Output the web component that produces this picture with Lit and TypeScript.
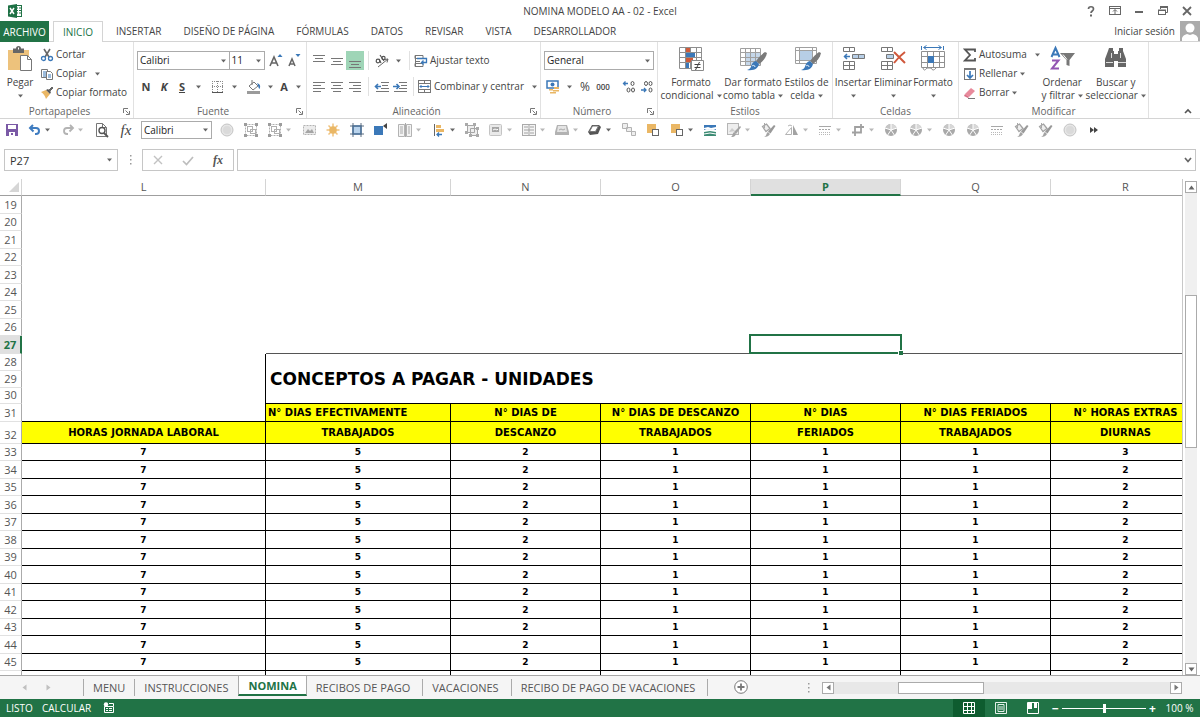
import { LitElement, html, svg, css, nothing, TemplateResult, SVGTemplateResult } from "lit";
import { customElement, property, state } from "lit/decorators.js";
import { classMap } from "lit/directives/class-map.js";

type Glyph = [number, number, SVGTemplateResult];

const SOFT = "#b3b3b3";
const BLUE = "#3b78b8";
const SAND = "#eab765";

const disc = svg`<circle cx="8" cy="8" r="6" fill="#e6e6e6" stroke="#c4c4c4"/><circle cx="8" cy="8" r="4" fill="#dadada"/>`;
const grouped = svg`<g fill="none" stroke="#b0b0b0"><rect x="2.500" y="2.500" width="11" height="11" stroke-dasharray="2 1"/><rect x="4.500" y="4.500" width="5" height="5"/><rect x="7.500" y="7.500" width="5" height="4"/></g><path fill="#9c9c9c" d="M1 1h3v3H1zM12 1h3v3h-3zM1 12h3v3H1zM12 12h3v3h-3z"/>`;
const pie = svg`<circle cx="8" cy="8" r="6" fill="#a9a9a9"/><path d="M8 8V2A6 6 0 0 1 13.700 6z" fill="#d8d8d8"/><path d="M8 8L2.400 6A6 6 0 0 1 8 2z" fill="#c6c6c6"/><path d="M8 8l6-2M8 8V1M8 8L2 6M8 8l-4 6M8 8l4 6" stroke="#fff"/>`;
const dashes = svg`<path d="M2 4.500h12" stroke="#a8a8a8"/><path d="M2 7.500h12" stroke="#a8a8a8" stroke-dasharray="2 1"/><path d="M2 10.500h12M2 12.500h12" stroke="#b8b8b8" stroke-dasharray="1 1"/>`;
const painter = svg`<path d="M2.500 4.500l4-2.500 3.500 4.500-4 3z" fill="#eee" stroke="#a3a3a3" stroke-width="1.300"/><path d="M4.500 1v5" stroke="#a8a8a8"/><path d="M14 3l1.500 1-5 7.500-2.500-2z" fill="#999"/><path d="M8 10l2 2c-1 2-3 3-6 3 3-1 2-4 4-5z" fill="#a3a3a3"/>`;
const lines = (rows: [number, number, number][]) => rows.map(([x, y, w]) => svg`<path d="M${x} ${y}.500h${w}" stroke="#777"/>`);
const brush = svg`<path d="M26 7l2 1c-1 5-4 8-8 11l-3-3c3-4 6-7 9-9z" fill="#7a7a7a"/><path d="M17 16l3 3c-1 4-4 7-12 6 4-1 4-4 5-6 1-2 3-3 4-3z" fill="${BLUE}"/><path d="M13 21c1-1 3-1 3 1" stroke="#dce9f5" fill="none"/>`;

const glyphs: Record<string, Glyph> = {
  excel: [16, 16, svg`<rect x="7.500" y="2.500" width="7" height="11" fill="#fff" stroke="#217346"/><path d="M9 5h2M12 5h2M9 7.500h2M12 7.500h2M9 10h2M12 10h2" stroke="#217346" stroke-width="1.200"/><path d="M1 2.500L10 1v14l-9-1.500z" fill="#1e7145"/><path d="M3 5l4 6M7 5l-4 6" stroke="#fff" stroke-width="1.500"/>`],
  help: [12, 12, svg`<path d="M3.500 4c0-3 5-3 5 0 0 2-2.500 2-2.500 4" fill="none" stroke="#666" stroke-width="1.700"/><path d="M5 9.500h2v2H5z" fill="#666"/>`],
  ribbonOpts: [12, 12, svg`<rect x="0.500" y="1.500" width="11" height="8" fill="none" stroke="#666"/><path d="M1 3.500h10M6 9V5M4 6.500l2-2 2 2" stroke="#666" fill="none"/>`],
  minimize: [12, 12, svg`<path d="M2 7h8" stroke="#666" stroke-width="2"/>`],
  restore: [12, 12, svg`<path d="M3.500 4V2.500h7v5H9" stroke="#666" fill="none"/><path d="M3 1h8v2H3z" fill="#666"/><rect x="1.500" y="5.500" width="7" height="4" fill="#fff" stroke="#666"/><path d="M1 4.500h8v1.500H1z" fill="#666"/>`],
  close: [12, 12, svg`<path d="M2 2l8 8M10 2l-8 8" stroke="#666" stroke-width="1.800"/>`],
  avatar: [20, 20, svg`<rect width="20" height="20" fill="#ababab"/><circle cx="10" cy="7" r="4.500" fill="#fff"/><path d="M2 20v-3q1-3 5-4l3 1 3-1q4 1 5 4v3z" fill="#fff"/>`],
  paste: [26, 28, svg`<path d="M1 5h21v20H1z" fill="#edc27c"/><path d="M6 3.500h3q0-2.500 2.500-2.500t2.500 2.500h3V8H6z" fill="#666"/><path d="M11.500 2.500v2" stroke="#fff"/><path d="M13.500 10.500h7l4 4v11h-11z" fill="#fff" stroke="#777"/><path d="M20.500 10.500v4h4" fill="none" stroke="#777"/>`],
  cut: [14, 14, svg`<path d="M4 1l5 8M10 1L5 9" stroke="#666" stroke-width="1.600"/><circle cx="3.500" cy="10.500" r="2" fill="none" stroke="${BLUE}" stroke-width="1.300"/><circle cx="10.500" cy="10.500" r="2" fill="none" stroke="${BLUE}" stroke-width="1.300"/>`],
  copy: [14, 14, svg`<path d="M1.500 2.500h6v8h-6z" fill="#fff" stroke="#777"/><path d="M3 5h3M3 7h3M3 9h3" stroke="${BLUE}"/><path d="M6.500 4.500h4l2 2v6h-6z" fill="#fff" stroke="#777"/><path d="M8 8h3M8 10h3" stroke="${BLUE}"/>`],
  format: [14, 14, svg`<path d="M1 6l5-2 4 4-4 5c-1-3-2-5-5-7z" fill="${SAND}"/><path d="M6 4l2-1 3 3-1 2z" fill="#555"/><path d="M9 4l3-3 1 1-3 3z" fill="#666" stroke="#666"/>`],
  growFont: [16, 16, svg`<path d="M2 13L6 4l4 9M3.500 10h5" fill="none" stroke="#666" stroke-width="1.600"/><path d="M9.500 4L12 1l2.500 3z" fill="${BLUE}"/>`],
  shrinkFont: [16, 16, svg`<path d="M3 13l3-7 3 7M4 11h4" fill="none" stroke="#666" stroke-width="1.500"/><path d="M9.500 1L12 4l2.500-3z" fill="${BLUE}"/>`],
  borders: [14, 14, svg`<path d="M1.500 1v11M6.500 1v11M11.500 1v11M1 1.500h11M1 6.500h11" stroke="#8a8a8a" stroke-dasharray="1 1"/><path d="M1 12.500h11" stroke="#555"/>`],
  fill: [16, 16, svg`<path d="M3 7l5-4 4 4-5 4z" fill="#fff" stroke="#777"/><path d="M6 1v5" stroke="#777"/><path d="M11 4c3 1 4 3 2.500 6C12 9 12.500 6 11 4z" fill="${BLUE}"/><path d="M1 12h13v3H1z" fill="#9b9b9b"/>`],
  vTop: [14, 16, svg`${lines([[1, 2, 12], [3, 5, 8], [1, 8, 12]])}`],
  vMid: [14, 16, svg`${lines([[1, 5, 12], [3, 8, 8], [1, 11, 12]])}`],
  vBot: [14, 16, svg`${lines([[1, 8, 12], [3, 11, 8], [1, 14, 12]])}`],
  hLeft: [14, 14, svg`${lines([[1, 2, 12], [1, 5, 8], [1, 8, 12], [1, 11, 8]])}`],
  hMid: [14, 14, svg`${lines([[1, 2, 12], [3, 5, 8], [1, 8, 12], [3, 11, 8]])}`],
  hRight: [14, 14, svg`${lines([[1, 2, 12], [5, 5, 8], [1, 8, 12], [5, 11, 8]])}`],
  orient: [16, 16, svg`<path d="M4 14l10-8M14 6l-1 3.500M14 6l-3.500 0.500" stroke="#666" fill="none"/><circle cx="4" cy="8" r="1.800" fill="none" stroke="#555" stroke-width="1.200"/><path d="M5 6l2 4M6 2l4 6" stroke="#555" stroke-width="1.200"/><circle cx="9.500" cy="5" r="1.600" fill="none" stroke="#555" stroke-width="1.200"/>`],
  outdent: [16, 14, svg`${lines([[7, 2, 8], [8, 5, 6], [7, 8, 8], [2, 11, 13]])}<path d="M7 6.500H2M4 4L1.500 6.500 4 9" fill="none" stroke="${BLUE}" stroke-width="1.600"/>`],
  indent: [16, 14, svg`${lines([[7, 2, 8], [9, 5, 6], [7, 8, 8], [2, 11, 13]])}<path d="M1 6.500h6M4.500 4L7 6.500 4.500 9" fill="none" stroke="${BLUE}" stroke-width="1.600"/>`],
  wrap: [14, 14, svg`<path d="M1 1.500h8v3H1zM1 9.500h8v3H1z" stroke="#777" fill="none"/><path d="M1.500 1v12M1 7.500h5" stroke="#777"/><path d="M3 4.500h9.500v4H8M9.500 6.500l-2 2 2 2" fill="none" stroke="${BLUE}" stroke-width="1.300"/>`],
  merge: [14, 14, svg`<rect x="0.500" y="0.500" width="12" height="12" fill="none" stroke="#777"/><path d="M0 3.500h13M0 9.500h13M6.500 0v3M6.500 10v3" stroke="#777"/><path d="M2 6.500h9M3.500 5L2 6.500 3.500 8M9.500 5L11 6.500 9.500 8" fill="none" stroke="${BLUE}"/>`],
  money: [16, 16, svg`<rect x="2" y="2" width="11" height="7" fill="#fff" stroke="${BLUE}" stroke-width="1.500"/><circle cx="7.500" cy="5.500" r="2" fill="${BLUE}"/><path d="M9 8h5v2H9zM8 11h6v1.500H8zM4 10h4v1.500H4zM5 13h6v1.500H5z" fill="${SAND}"/>`],
  moreDec: [14, 14, svg`<path d="M6 3.500H2M3.500 1.500l-2 2 2 2" stroke="${BLUE}" fill="none" stroke-width="1.300"/><g fill="none" stroke="#555"><ellipse cx="10.500" cy="3.500" rx="1.500" ry="2"/><ellipse cx="6.500" cy="10" rx="1.500" ry="2"/><ellipse cx="11" cy="10" rx="1.500" ry="2"/></g>`],
  lessDec: [14, 14, svg`<path d="M1 10h5M4 8l2 2-2 2" stroke="${BLUE}" fill="none" stroke-width="1.300"/><g fill="none" stroke="#555"><ellipse cx="6" cy="3.500" rx="1.500" ry="2"/><ellipse cx="10.500" cy="3.500" rx="1.500" ry="2"/><ellipse cx="10.500" cy="10" rx="1.500" ry="2"/></g>`],
  condFormat: [28, 28, svg`<path d="M2.500 2.500h22v21h-22zM2 7.500h22M2 12.500h22M2 17.500h22M8.500 2v21M13.500 2v21M19.500 2v21" fill="none" stroke="#8e8e8e"/><path d="M9 3h4v4H9zM9 13h7v4H9z" fill="#cf5b3b"/><path d="M9 8h9v4H9zM9 18h3v5H9z" fill="${BLUE}"/><path d="M14.500 15.500h12v10h-12z" fill="#fff" stroke="#8a8a8a"/><path d="M17.500 19.500h6M17.500 22.500h6M22.500 17l-4 8" stroke="#444"/>`],
  tableFormat: [28, 28, svg`<path d="M7 8h14v13H7z" fill="#c5d7ea"/><path d="M1.500 3.500h20v17h-20zM1 7.500h20M1 12.500h20M1 16.500h20M6.500 3v17M11.500 3v17M16.500 3v17" fill="none" stroke="#a0a0a0"/>${brush}`],
  cellStyle: [28, 28, svg`<path d="M7 6h13v10H7z" fill="#b7cee6"/><path d="M2.500 2.500h21v16h-21zM2 5.500h21M2 15.500h18M6.500 2v17M19.500 2v14" fill="none" stroke="#a0a0a0"/>${brush}`],
  insertCells: [28, 28, svg`<g fill="#fff" stroke="#777"><path d="M4.500 2.500h11v4h-11zM10.500 2v4M4.500 16.500h11v8h-11zM10.500 16v8M4 20.500h11"/><path d="M13.500 9.500h12v4h-12z" fill="#b7cee6"/><path d="M19.500 9v4"/></g><path d="M11 11.500H5.500M8 9l-2.500 2.500L8 14" fill="none" stroke="${BLUE}" stroke-width="1.500"/>`],
  deleteCells: [28, 28, svg`<g fill="#fff" stroke="#777"><path d="M2.500 2.500h11v4h-11zM8.500 2v4M2.500 16.500h11v8h-11zM8.500 16v8M2 20.500h11"/><path d="M7.500 9.500h7v4h-7z" fill="#b7cee6"/></g><path d="M15 7l11 11M26 7c-4 3-8 7-11 11" stroke="#d0583c" stroke-width="2" fill="none"/>`],
  formatCells: [28, 28, svg`<path d="M5 2.500h17M7.500 0.500l-3 2 3 2M19.500 0.500l3 2-3 2M2.500 1v4M24.500 1v4" fill="none" stroke="${BLUE}"/><path d="M2.500 6.500h23v16h-23zM2 11.500h23M2 17.500h23M8.500 6v16M14.500 6v16M20.500 6v16" fill="none" stroke="#909090"/><path d="M9 11h6v7H9z" fill="${BLUE}"/><path d="M4 23q1 4 4 0h4q2 4 5 0" fill="#fff" stroke="#909090"/>`],
  sum: [14, 14, svg`<path d="M12 4V1.500H2L7 7l-5 5.500h10V10" fill="none" stroke="#555" stroke-width="1.800"/>`],
  fillDown: [14, 14, svg`<rect x="1.500" y="1.500" width="11" height="11" fill="#fff" stroke="#777"/><path d="M1 1h12v2H1z" fill="#777"/><path d="M7 4v7M4 8l3 3 3-3" fill="none" stroke="${BLUE}" stroke-width="1.700"/>`],
  eraser: [14, 14, svg`<path d="M2 8l6-6 4 3-6 6z" fill="#e88a9c"/><path d="M2 8l4 3-1 1-4-2z" fill="#d86d84"/><path d="M5 12.500h7" stroke="#777"/>`],
  sort: [28, 28, svg`<path d="M3.500 12l4-9 4 9M5 9.500h5" fill="none" stroke="${BLUE}" stroke-width="2"/><path d="M4 15.500h6.500L4 23.500h7" fill="none" stroke="#9356b3" stroke-width="2"/><path d="M12 8h15l-5.500 7v6l-3-1v-5z" fill="#777"/><path d="M15 9.500l4 5" stroke="#fff"/>`],
  find: [28, 28, svg`<path d="M7 3h4v3h1v3h4V6h1V3h4v3l3 8v8h-8v-6h-4v6H3v-8l3-8z" fill="#666"/><path d="M9.500 8v5M18.500 8v5M4 17.500h7M16 17.500h8" stroke="#ddd"/>`],
  save: [14, 14, svg`<path d="M1 1h12v12H1z" fill="#7b5aa6"/><path d="M3 2h8v4H3zM4 9h6v4H4z" fill="#fff"/><path d="M6 10h2v2H6z" fill="#7b5aa6"/>`],
  undo: [14, 14, svg`<path d="M5 2L2 5l3.500 3.500M2 5h6c4 0 4 6 0 6H7" fill="none" stroke="#3f7cc0" stroke-width="2"/>`],
  redo: [14, 14, svg`<path d="M9 2l3 3-3.500 3.500M12 5H6c-4 0-4 6 0 6h1" fill="none" stroke="#b3b3b3" stroke-width="1.800"/>`],
  preview: [14, 16, svg`<path d="M1.500 1.500h6l4 4v9h-10z" fill="#fff" stroke="#777"/><path d="M7.500 1.500v4h4" fill="none" stroke="#777"/><circle cx="7" cy="8.500" r="3" fill="#fff" stroke="#555" stroke-width="1.400"/><path d="M9 11l4 4" stroke="#555" stroke-width="1.800"/>`],
  disc: [16, 16, disc],
  grouped: [16, 16, grouped],
  picture: [16, 16, svg`<rect x="2.500" y="3.500" width="12" height="9" fill="#ececec" stroke="${SOFT}" stroke-dasharray="2 1"/><path d="M4 11l3-4 2 2 2-2 2 4z" fill="#a5a5a5"/>`],
  sun: [16, 16, svg`<path d="M8 1.500v13M1.500 8h13M3.500 3.500l9 9M12.500 3.500l-9 9" stroke="#f0c27e" stroke-width="1.500"/><circle cx="8" cy="8" r="3.800" fill="${SAND}"/>`],
  frame: [16, 16, svg`<rect x="4" y="4" width="8" height="8" fill="#b9d3ec" stroke="${BLUE}" stroke-width="1.500"/><path d="M1 4h14M1 12h14M4 1v14M12 1v14" stroke="#5c6f82"/>`],
  blueSquare: [16, 16, svg`<path d="M1 4h9v9H1z" fill="${BLUE}"/><path d="M14 1v6l-4-3z" fill="#444"/>`],
  columns: [16, 16, svg`<path d="M1.500 2.500h6v12h-6zM9.500 2.500h5v12h-5z" fill="#f3f3f3" stroke="${SOFT}"/><path d="M3 5h3M3 7h3M3 9h3M3 11h3M11 5h2M11 7h2M11 9h2M11 11h2M8.500 1v14" stroke="#aaa"/>`],
  alignObj: [16, 16, svg`<path d="M3.500 2v12" stroke="#666"/><path d="M5 3h5v3H5zM5 7h8v3H5z" fill="${SAND}"/><path d="M11 12.500H6M8 10.500l-2 2 2 2" fill="none" stroke="${BLUE}" stroke-width="1.300"/>`],
  regroup: [16, 16, svg`<path d="M3.500 3.500h7v7h-7zM6.500 6.500h7v7h-7z" fill="#eee" stroke="#a6a6a6"/><path d="M1 1h3v3H1zM9 1h3v3H9zM1 9h3v3H1zM12 5h3v3h-3zM12 12h3v3h-3zM5 12h3v3H5z" fill="#aaa"/>`],
  shape: [16, 16, svg`<rect x="1.500" y="2.500" width="12" height="11" rx="1" fill="#e9e9e9" stroke="#c4c4c4"/><path d="M4 5h7v5H4z" fill="#a6a6a6"/><path d="M5 8l2-1 2 1 1-1" stroke="#fff" fill="none"/>`],
  smart: [16, 16, svg`<rect x="1.500" y="2.500" width="13" height="11" fill="#f4f4f4" stroke="#aaa"/><path d="M3 5h4M9 5h4M3 8h10M3 11h4M9 11h4M8 3v10" stroke="#a2a2a2"/>`],
  plate: [16, 16, svg`<path d="M3 3h10l2 7v3H1v-3z" fill="#b2b2b2"/><path d="M4 4h8l1 6H3z" fill="#e4e4e4"/><path d="M5 8l2-1 2 1 2-1" stroke="#aaa" fill="none"/>`],
  cube: [16, 16, svg`<path d="M5 3h7l2 2-3 7-8 1-2-3z" fill="#555"/><path d="M5.500 4h6l-3 5.500H2.500z" fill="#fff" stroke="#777"/>`],
  squares: [16, 16, svg`<path d="M1.500 1.500h5v5h-5zM5.500 5.500h5v4h-5zM10.500 9.500h4v4h-4z" fill="#eee" stroke="${SOFT}"/>`],
  forward: [16, 16, svg`<path d="M2 2h9v9H2z" fill="${SAND}"/><rect x="7.500" y="7.500" width="6" height="6" fill="#fff" stroke="#666"/>`],
  landscape: [16, 16, svg`<path d="M2 3h12v5l-3-1-3 1-3-1-3 1z" fill="${BLUE}"/><path d="M2 6l4-1 3 1 5-1v2l-6 1-6-1z" fill="#fff"/><path d="M2 10l6-1 6 1v4H2z" fill="#3d8b74"/><path d="M2 12l6-1 6 1" stroke="#fff" fill="none"/>`],
  drawPic: [16, 16, svg`<rect x="1.500" y="1.500" width="11" height="11" fill="#eee" stroke="#b5b5b5"/><path d="M3 10l3-4 3 3z" fill="#ccc"/><path d="M14 4l1 1-5 7-2-2z" fill="#a3a3a3"/><path d="M8 10l2 2c-1 3-3 3-5 3 2-1 1-3 3-5z" fill="#a3a3a3"/>`],
  painter: [16, 16, painter],
  mirror: [16, 16, svg`<path d="M1.500 12.500h6v-7z" fill="#fff" stroke="${SOFT}"/><path d="M9 3l5 10H9z" fill="#a3a3a3"/><path d="M4 4q2-2 4 0" stroke="${SOFT}" fill="none"/>`],
  dashes: [16, 16, dashes],
  crop: [16, 16, svg`<path d="M5 14V5h9M2 10.500h9V2M2 10.500h3" fill="none" stroke="#a0a0a0" stroke-width="1.800"/>`],
  pie: [16, 16, pie],
  more: [10, 10, svg`<path d="M1 2l4 3-4 3zM5 2l4 3-4 3z" fill="#444"/>`],
  cancel: [12, 12, svg`<path d="M2 2l8 8M10 2l-8 8" stroke="#c2c2c2" stroke-width="1.400"/>`],
  accept: [12, 12, svg`<path d="M1 7l3.500 3.500L11 3" fill="none" stroke="#bdbdbd" stroke-width="1.700"/>`],
  chevDown: [8, 8, svg`<path d="M1 2l3 3.500L7 2" fill="none" stroke="#666" stroke-width="1.700"/>`],
  chevUp: [10, 8, svg`<path d="M2 6l3-3 3 3" fill="none" stroke="#555" stroke-width="1.600"/>`],
  caret: [5, 4, svg`<path d="M0 0.500h5L2.500 3.500z" fill="#666"/>`],
  caretSoft: [5, 4, svg`<path d="M0 0.500h5L2.500 3.500z" fill="#b8b8b8"/>`],
  launcher: [7, 7, svg`<path d="M0.500 5V0.500H5M2.500 2.500l3 3M6.500 3v3.500H3" fill="none" stroke="#777"/>`],
  grip: [3, 12, svg`<path d="M1 1h1.500v1.500H1zM1 5h1.500v1.500H1zM1 9h1.500v1.500H1z" fill="#9a9a9a"/>`],
  corner: [10, 10, svg`<path d="M10 0v10H0z" fill="#d6d6d6"/>`],
  triUp: [7, 5, svg`<path d="M0.500 4.500h6l-3-4z" fill="#666"/>`],
  triDown: [7, 5, svg`<path d="M0.500 0.500h6l-3 4z" fill="#666"/>`],
  triLeft: [5, 7, svg`<path d="M4.500 0.500v6l-4-3z" fill="#777"/>`],
  triRight: [5, 7, svg`<path d="M0.500 0.500v6l4-3z" fill="#777"/>`],
  triLeftSoft: [5, 7, svg`<path d="M4.500 0.500v6l-4-3z" fill="#c0c0c0"/>`],
  triRightSoft: [5, 7, svg`<path d="M0.500 0.500v6l4-3z" fill="#c0c0c0"/>`],
  add: [14, 14, svg`<circle cx="7" cy="7" r="6.300" fill="#fff" stroke="#777"/><path d="M7 3.500v7M3.500 7h7" stroke="#777" stroke-width="1.800"/>`],
  macro: [12, 12, svg`<path d="M1.500 4.500h9v6h-9zM6 1.500h4.500V4" fill="none" stroke="#fff"/><circle cx="3" cy="2.500" r="2.200" fill="#fff"/><path d="M3 6.500h2M6 6.500h3M3 8.500h2M6 8.500h3" stroke="#fff"/>`],
  viewGrid: [12, 12, svg`<path d="M0.500 0.500h11v11H0.500zM4.500 0v12M8.500 0v12M0 4.500h12M0 8.500h12" fill="none" stroke="#fff"/>`],
  viewPage: [12, 12, svg`<path d="M0.500 0.500h11v11H0.500zM3 2.500h6v7H3zM4 5h4M4 7h4" fill="none" stroke="#e4f0e9"/>`],
  viewBreak: [12, 12, svg`<path d="M0.500 0.500h11v11H0.500z" fill="none" stroke="#fff"/><path d="M1 1h4v6H1zM7 1h3v5H7z" fill="#fff"/>`],
};

const icon = (name: string): TemplateResult => {
  const [w, h, body] = glyphs[name];
  return html`<svg class="icon" width=${w} height=${h} viewBox="0 0 ${w} ${h}" aria-hidden="true">${body}</svg>`;
};

const base = css`
  * { box-sizing: border-box; }
  button, select, input {
    font: inherit;
    color: inherit;
    margin: 0;
    padding: 0;
    border: 0;
    border-radius: 0;
    background: none;
    outline-offset: -1px;
  }
  button {
    display: inline-flex;
    align-items: center;
    justify-content: center;
    flex: none;
    white-space: nowrap;
  }
  .icon { display: block; flex: none; }
  select {
    appearance: none;
    border: 1px solid #ababab;
    background: #fff url("data:image/svg+xml,%3Csvg xmlns='http://www.w3.org/2000/svg' width='5' height='4'%3E%3Cpath d='M0 .5h5L2.5 3.500z' fill='%23666'/%3E%3C/svg%3E") no-repeat right 3px center;
    color: #222;
    padding-left: 2px;
  }
`;

@customElement("title-bar")
export class TitleBar extends LitElement {
  static styles = [base, css`
    :host { display: block; }
    .bar { display: grid; grid-template-columns: 1fr auto 1fr; align-items: center; height: 21px; }
    .logo { padding-left: 7px; }
    .name { font-size: 10px; line-height: 14px; font-weight: 400; margin: 0; color: #444; }
    .window { display: flex; justify-content: flex-end; padding-right: 1px; }
    .window button { width: 24px; height: 20px; }
    .tabs { display: flex; height: 21px; border-bottom: 1px solid #d4d4d4; color: #444; }
    .tab { height: 20px; padding: 0 11px; font-size: 10px; }
    .file { width: 49px; height: 21px; padding: 0; background: #217346; color: #fff; }
    .current { height: 21px; margin: 0 2px 0 4px; padding: 0 9px; border: 1px solid #d4d4d4; border-bottom: 0; background: #fff; color: #217346; }
    .account { display: flex; align-items: center; gap: 5px; margin-left: auto; font-size: 10px; height: 20px; }
  `];
  render() {
    const tabs = ["INSERTAR", "DISEÑO DE PÁGINA", "FÓRMULAS", "DATOS", "REVISAR", "VISTA", "DESARROLLADOR"];
    const controls: [string, string][] = [["help", "Ayuda"], ["ribbonOpts", "Opciones de cinta"], ["minimize", "Minimizar"], ["restore", "Restaurar"], ["close", "Cerrar"]];
    return html`
      <header class="bar">
        <span class="logo">${icon("excel")}</span>
        <h1 class="name">NOMINA MODELO AA - 02 - Excel</h1>
        <div class="window">${controls.map(([g, l]) => html`<button aria-label=${l}>${icon(g)}</button>`)}</div>
      </header>
      <nav class="tabs">
        <button class="tab file">ARCHIVO</button>
        <button class="tab current">INICIO</button>
        ${tabs.map((t) => html`<button class="tab">${t}</button>`)}
        <button class="account">Iniciar sesión ${icon("avatar")}</button>
      </nav>`;
  }
}

@customElement("ribbon-bar")
export class RibbonBar extends LitElement {
  static styles = [base, css`
    :host { display: block; font-size: 10px; line-height: 13px; color: #444; }
    .ribbon { display: flex; height: 77px; border-bottom: 1px solid #d4d4d4; }
    .group { flex: none; display: flex; flex-direction: column; padding-top: 3px; border-right: 1px solid #e1e1e1; }
    .body { display: flex; height: 58px; flex: none; }
    .foot { display: flex; align-items: center; height: 14px; margin-top: 1px; color: #666; }
    .foot span { flex: 1; text-align: center; }
    .foot button { width: 14px; height: 14px; }
    .clip { width: 134px; }
    .font { width: 173px; }
    .align { width: 234px; }
    .number { width: 117px; }
    .styles { width: 175px; }
    .cells { width: 126px; }
    .edit { width: 190px; }
    .big { display: flex; flex-direction: column; justify-content: flex-start; width: 40px; height: 58px; }
    .big .icon { margin-bottom: 3px; }
    .big .line { display: flex; align-items: center; gap: 3px; height: 13px; line-height: 13px; }
    .big .line .icon { margin-bottom: 0; }
    .wide { width: 62px; }
    .mid { width: 45px; }
    .stack { display: flex; flex-direction: column; align-items: flex-start; }
    .item { height: 19px; gap: 2px; }
    .item .caret { margin-left: 6px; }
    .tight .caret { margin-left: 1px; }
    .rows { display: flex; flex-direction: column; gap: 7px; padding: 6px 3px 0; width: 100%; }
    .row { display: flex; align-items: center; height: 19px; }
    .tool { width: 18px; height: 19px; }
    .drop { width: 14px; height: 19px; }
    .on { background: #9fd5b7; }
    .rule { width: 1px; height: 19px; margin: 0 4px; background: #e1e1e1; }
    .font .rule { margin: 0 2px; }
    .bold { font-weight: 700; font-size: 11px; }
    .italic { font-weight: 700; font-style: italic; font-size: 11px; }
    .under { font-weight: 700; text-decoration: underline; font-size: 11px; }
    .thousands { font-size: 8px; font-weight: 600; }
    .percent { font-size: 12px; }
    .name { width: 94px; height: 19px; }
    .size { width: 37px; height: 19px; margin-left: -1px; margin-right: 2px; }
    .numfmt { width: 110px; height: 19px; }
    .pad { padding-left: 2px; }
    .edit .body { padding-left: 4px; }
    .collapse { margin-left: auto; align-self: flex-end; width: 24px; height: 14px; }
  `];

  private tool(glyph: string, label: string, on = false) {
    return html`<button class=${classMap({ tool: true, on })} aria-label=${label}>${icon(glyph)}</button>`;
  }
  private drop(label: string) {
    return html`<button class="drop" aria-label=${label}>${icon("caret")}</button>`;
  }
  private item(glyph: string, label: string, caret = false, tight = false) {
    return html`<button class=${classMap({ item: true, tight })}>${icon(glyph)}<span>${label}</span>${caret ? html`<span class="caret">${icon("caret")}</span>` : nothing}</button>`;
  }
  private big(glyph: string, top: string, bottom: string, size: string) {
    return html`<button class="big ${size}">${icon(glyph)}<span class="line">${top}</span><span class="line">${bottom} ${icon("caret")}</span></button>`;
  }
  private foot(label: string, launcher = true) {
    return html`<div class="foot"><span>${label}</span>${launcher ? html`<button aria-label="Opciones de ${label}">${icon("launcher")}</button>` : nothing}</div>`;
  }

  render() {
    return html`<div class="ribbon">
      <section class="group clip">
        <div class="body">
          ${this.big("paste", "Pegar", "", "")}
          <div class="stack">${this.item("cut", "Cortar")}${this.item("copy", "Copiar", true)}${this.item("format", "Copiar formato")}</div>
        </div>${this.foot("Portapapeles")}
      </section>
      <section class="group font">
        <div class="body"><div class="rows">
          <div class="row">
            <select class="name" aria-label="Fuente"><option>Calibri</option></select>
            <select class="size" aria-label="Tamaño de fuente"><option>11</option></select>
            ${this.tool("growFont", "Aumentar tamaño")}${this.tool("shrinkFont", "Disminuir tamaño")}
          </div>
          <div class="row">
            <button class="tool bold">N</button><button class="tool italic">K</button><button class="tool under">S</button>${this.drop("Subrayado")}
            <span class="rule"></span>${this.tool("borders", "Bordes")}${this.drop("Más bordes")}
            <span class="rule"></span>${this.tool("fill", "Color de relleno")}${this.drop("Más rellenos")}
            <button class="drop bold">A</button>${this.drop("Color de fuente")}
          </div>
        </div></div>${this.foot("Fuente")}
      </section>
      <section class="group align">
        <div class="body"><div class="rows">
          <div class="row">
            ${this.tool("vTop", "Alinear arriba")}${this.tool("vMid", "Alinear en el medio")}${this.tool("vBot", "Alinear abajo", true)}
            <span class="rule"></span>${this.tool("orient", "Orientación")}${this.drop("Más orientaciones")}
            <span class="rule"></span>${this.item("wrap", "Ajustar texto")}
          </div>
          <div class="row">
            ${this.tool("hLeft", "Alinear a la izquierda")}${this.tool("hMid", "Centrar")}${this.tool("hRight", "Alinear a la derecha")}
            <span class="rule"></span>${this.tool("outdent", "Disminuir sangría")}${this.tool("indent", "Aumentar sangría")}
            <span class="rule"></span>${this.item("merge", "Combinar y centrar", true)}
          </div>
        </div></div>${this.foot("Alineación")}
      </section>
      <section class="group number">
        <div class="body"><div class="rows">
          <div class="row"><select class="numfmt" aria-label="Formato de número"><option>General</option></select></div>
          <div class="row">
            ${this.tool("money", "Formato de contabilidad")}${this.drop("Más formatos")}
            <button class="tool percent">%</button><button class="tool thousands">000</button>
            <span class="rule"></span>${this.tool("moreDec", "Aumentar decimales")}${this.tool("lessDec", "Disminuir decimales")}
          </div>
        </div></div>${this.foot("Número")}
      </section>
      <section class="group styles">
        <div class="body pad">
          ${this.big("condFormat", "Formato", "condicional", "wide")}${this.big("tableFormat", "Dar formato", "como tabla", "wide")}${this.big("cellStyle", "Estilos de", "celda", "mid")}
        </div>${this.foot("Estilos", false)}
      </section>
      <section class="group cells">
        <div class="body">
          ${this.big("insertCells", "Insertar", "", "")}${this.big("deleteCells", "Eliminar", "", "")}${this.big("formatCells", "Formato", "", "")}
        </div>${this.foot("Celdas", false)}
      </section>
      <section class="group edit">
        <div class="body">
          <div class="stack">${this.item("sum", "Autosuma", true)}${this.item("fillDown", "Rellenar", true, true)}${this.item("eraser", "Borrar", true, true)}</div>
          ${this.big("sort", "Ordenar", "y filtrar", "mid")}${this.big("find", "Buscar y", "seleccionar", "wide")}
        </div>${this.foot("Modificar", false)}
      </section>
      <button class="collapse" aria-label="Contraer la cinta">${icon("chevUp")}</button>
    </div>`;
  }
}

@customElement("quick-access")
export class QuickAccess extends LitElement {
  static styles = [base, css`
    :host { display: block; font-size: 10px; color: #444; }
    .bar { display: flex; align-items: center; height: 22px; }
    .tool { width: 24px; height: 22px; }
    .split { width: 33px; height: 22px; padding-left: 4px; gap: 3px; justify-content: flex-start; }
    .fx { font-family: "Liberation Serif", serif; font-style: italic; font-size: 15px; }
    .name { width: 71px; height: 18px; margin: 0 3px; }
    .tools { display: flex; justify-content: space-between; width: 891px; }
  `];
  render() {
    const tools = "disc grouped grouped- picture sun frame blueSquare columns- alignObj+ regroup shape- smart- plate- cube+ squares forward forward+ landscape drawPic- painter mirror- dashes- crop- pie pie- pie pie dashes painter painter disc more".split(" ");
    const tool = (t: string) => {
      const name = t.replace(/[+-]$/, "");
      const caret = t.endsWith("+") ? "caret" : t.endsWith("-") ? "caretSoft" : "";
      return html`<button class=${caret ? "split" : "tool"} aria-label=${name}>${icon(name)}${caret ? icon(caret) : nothing}</button>`;
    };
    return html`<div class="bar">
      ${tool("save")}${tool("undo+")}${tool("redo-")}${tool("preview")}
      <button class="tool fx">fx</button>
      <select class="name" aria-label="Fuente"><option>Calibri</option></select>
      <div class="tools">${tools.map(tool)}</div>
    </div>`;
  }
}

@customElement("formula-bar")
export class FormulaBar extends LitElement {
  @property() cell = "";
  static styles = [base, css`
    :host { display: block; font-size: 11px; color: #333; }
    .bar { display: flex; align-items: center; padding: 8px 4px; }
    .box { display: flex; align-items: center; height: 22px; border: 1px solid #c6c6c6; }
    .ref { width: 114px; }
    .ref input { flex: 1; min-width: 0; padding-left: 5px; }
    .ref button { width: 16px; height: 20px; }
    .grip { width: 24px; display: flex; justify-content: center; }
    .acts { width: 92px; margin-right: 3px; }
    .acts button { width: 30px; height: 20px; }
    .fx { font-family: "Liberation Serif", serif; font-style: italic; font-weight: 700; font-size: 12px; color: #555; }
    .text { flex: 1; }
    .text input { flex: 1; height: 20px; padding-left: 4px; }
    .text button { width: 14px; height: 20px; }
  `];
  render() {
    return html`<div class="bar">
      <div class="box ref"><input aria-label="Cuadro de nombres" .value=${this.cell}><button aria-label="Nombres">${icon("caret")}</button></div>
      <span class="grip">${icon("grip")}</span>
      <div class="box acts"><button aria-label="Cancelar">${icon("cancel")}</button><button aria-label="Introducir">${icon("accept")}</button><button class="fx">fx</button></div>
      <div class="box text"><input aria-label="Barra de fórmulas"><button aria-label="Expandir">${icon("chevDown")}</button></div>
    </div>`;
  }
}

@customElement("work-sheet")
export class WorkSheet extends LitElement {
  @property() selected = "P27";
  static styles = [base, css`
    :host { display: flex; flex: 1; min-height: 0; border-bottom: 1px solid #a6a6a6; }
    .sheet { flex: 1; min-width: 0; overflow: hidden; position: relative; border-right: 1px solid #c8c8c8; }
    table { width: 1201px; table-layout: fixed; border-collapse: separate; border-spacing: 0; font-size: 11px; }
    .cRow { width: 22px; }
    .cL { width: 244px; }
    .cM { width: 185px; }
    .cN { width: 150px; }
    th, td { padding: 0; overflow: hidden; white-space: nowrap; text-align: center; }
    thead th { height: 17px; line-height: 14px; padding-bottom: 1px; font-weight: 400; color: #555; border-right: 1px solid #d4d4d4; border-bottom: 1px solid #9f9f9f; }
    thead th.sel { background: #e0e0e0; color: #217346; font-weight: 700; padding-bottom: 0; border-bottom: 2px solid #217346; }
    .corner .icon { margin-left: 9px; }
    tbody th { font-weight: 400; line-height: 13px; padding-bottom: 2px; color: #555; vertical-align: bottom; border-right: 1px solid #ababab; border-bottom: 1px solid #e1e1e1; }
    tbody th.sel { background: #e0e0e0; color: #217346; font-weight: 700; border-right: 2px solid #217346; }
    .h16 > * { height: 16px; }
    .h17 > * { height: 17px; }
    .h18 > * { height: 18px; }
    .h22 > * { height: 22px; }
    td { font-family: "DejaVu Sans", sans-serif; font-weight: 700; font-size: 10px; line-height: 14px; color: #000; }
    .top { border-bottom: 1px solid #555; }
    .side { border-right: 1px solid #000; }
    .line { border-right: 1px solid #000; border-bottom: 1px solid #000; }
    .head { background: #ff0; }
    .left { text-align: left; padding-left: 2px; }
    .title { font-size: 17px; text-align: left; padding-left: 4px; border-bottom: 1px solid #000; }
    .value { font-size: 9px; }
    .picked { position: relative; overflow: visible; }
    .picked::after { content: ""; position: absolute; inset: -2px -1px -1px -2px; border: 2px solid #217346; }
    .handle { position: absolute; z-index: 1; right: -2px; bottom: -2px; width: 5px; height: 5px; background: #217346; border: 1px solid #fff; border-width: 1px 0 0 1px; }
    .scroll { width: 17px; padding: 2px 3px 0 2px; display: flex; flex-direction: column; }
    .scroll button { width: 12px; height: 12px; border: 1px solid #ababab; background: #fff; }
    .track { flex: 1; background: #f0f0f0; padding-top: 102px; }
    .thumb { width: 12px; height: 153px; border: 1px solid #ababab; background: #fff; }
  `];

  private rowHead(n: number) {
    return html`<th scope="row" class=${classMap({ sel: n === 27 })}>${n}</th>`;
  }

  render() {
    const cols = ["L", "M", "N", "O", "P", "Q", "R"];
    const rest = cols.slice(1);
    const blank = Array.from({ length: 9 }, (_, i) => 19 + i);
    const data = Array.from({ length: 13 }, (_, i) => 33 + i);
    const upper = ["N° DIAS EFECTIVAMENTE", "N° DIAS DE", "N° DIAS DE DESCANZO", "N° DIAS", "N° DIAS FERIADOS", "N° HORAS EXTRAS"];
    const lower = ["HORAS JORNADA LABORAL", "TRABAJADOS", "DESCANZO", "TRABAJADOS", "FERIADOS", "TRABAJADOS", "DIURNAS"];
    return html`
      <div class="sheet"><table>
        <colgroup><col class="cRow"><col class="cL"><col class="cM"><col class="cN"><col class="cN"><col class="cN"><col class="cN"><col class="cN"></colgroup>
        <thead><tr><th class="corner">${icon("corner")}</th>${cols.map((c) => html`<th scope="col" class=${classMap({ sel: c === "P" })}>${c}</th>`)}</tr></thead>
        <tbody>
          ${blank.map((n) => html`<tr class=${n % 2 ? "h18" : "h17"}>${this.rowHead(n)}${cols.map((c) => {
            const picked = c + n === this.selected;
            return html`<td class=${classMap({ picked, top: n === 27 && c !== "L" })}>${picked ? html`<span class="handle"></span>` : nothing}</td>`;
          })}</tr>`)}
          <tr class="h17">${this.rowHead(28)}<td class="side"></td><td class="title" colspan="6" rowspan="3">CONCEPTOS A PAGAR - UNIDADES</td></tr>
          <tr class="h17">${this.rowHead(29)}<td class="side"></td></tr>
          <tr class="h16">${this.rowHead(30)}<td class="side"></td></tr>
          <tr class="h18">${this.rowHead(31)}<td class="line"></td>${upper.map((t, i) => html`<td class=${classMap({ line: true, head: true, left: i === 0 })}>${t}</td>`)}</tr>
          <tr class="h22">${this.rowHead(32)}${lower.map((t) => html`<td class="line head">${t}</td>`)}</tr>
          ${data.map((n) => html`<tr class=${n % 2 ? "h17" : "h18"}>${this.rowHead(n)}<td class="line value">7</td>${rest.map((c) => {
            const v = c === "M" ? 5 : c === "N" ? 2 : c === "R" ? (n === 33 ? 3 : 2) : 1;
            return html`<td class="line value">${v}</td>`;
          })}</tr>`)}
          <tr class="h18"><th></th>${cols.map(() => html`<td class="line"></td>`)}</tr>
        </tbody>
      </table></div>
      <div class="scroll">
        <button aria-label="Arriba">${icon("triUp")}</button>
        <div class="track"><div class="thumb"></div></div>
        <button aria-label="Abajo">${icon("triDown")}</button>
      </div>`;
  }
}

@customElement("sheet-tabs")
export class SheetTabs extends LitElement {
  @state() private active = "NOMINA";
  static styles = [base, css`
    :host { display: block; font-size: 11px; color: #555; }
    .bar { display: flex; height: 23px; background: #f5f5f5; }
    .nav { display: flex; width: 84px; padding-left: 12px; border-right: 1px solid #ababab; margin: 3px 0; }
    .nav button { width: 24px; height: 17px; }
    .tab { height: 17px; margin: 3px 0; padding: 0 9px; border-right: 1px solid #ababab; }
    .before { border-right-color: transparent; }
    .after { padding-right: 12px; }
    .active { height: 20px; margin: 0 0 3px; background: #fff; color: #217346; font-weight: 700; border: 1px solid #ababab; border-width: 0 1px 2px; border-bottom-color: #217346; }
    .add { width: 66px; height: 22px; }
    .hscroll { display: flex; flex: none; align-items: center; margin-left: auto; width: 393px; padding-right: 18px; }
    .grip { width: 14px; margin-right: 1px; }
    .hscroll button { width: 12px; height: 12px; border: 1px solid #ababab; background: #fff; }
    .track { flex: 1; height: 12px; background: #e8e8e8; padding-left: 64px; }
    .thumb { width: 86px; height: 12px; border: 1px solid #ababab; background: #fff; }
  `];
  render() {
    const tabs = ["MENU", "INSTRUCCIONES", "NOMINA", "RECIBOS DE PAGO", "VACACIONES", "RECIBO DE PAGO DE VACACIONES"];
    const at = tabs.indexOf(this.active);
    return html`<nav class="bar">
      <div class="nav"><button aria-label="Hojas anteriores">${icon("triLeftSoft")}</button><button aria-label="Hojas siguientes">${icon("triRightSoft")}</button></div>
      ${tabs.map((t, i) => html`<button class=${classMap({ tab: true, active: i === at, before: i === at - 1, after: i > at })} @click=${() => (this.active = t)}>${t}</button>`)}
      <button class="add" aria-label="Nueva hoja">${icon("add")}</button>
      <div class="hscroll"><span class="grip">${icon("grip")}</span>
        <button aria-label="Izquierda">${icon("triLeft")}</button>
        <div class="track"><div class="thumb"></div></div>
        <button aria-label="Derecha">${icon("triRight")}</button>
      </div>
    </nav>`;
  }
}

@customElement("status-bar")
export class StatusBar extends LitElement {
  static styles = [base, css`
    :host { display: block; font-size: 10px; color: #fff; }
    .bar { display: flex; align-items: center; height: 18px; background: #217346; padding-left: 6px; }
    .state { width: 36px; }
    .calc { margin-right: 12px; }
    .views { display: flex; margin-left: auto; }
    .views button { width: 32px; height: 18px; }
    .views .on { background: #0e5c2f; }
    .zoom { width: 13px; height: 18px; font-weight: 700; font-size: 12px; }
    input[type="range"] { appearance: none; width: 84px; height: 12px; background: linear-gradient(#fff, #fff) center / 100% 1px no-repeat; }
    input[type="range"]::-webkit-slider-thumb { appearance: none; width: 3px; height: 9px; background: #fff; }
    .pct { width: 41px; text-align: center; }
  `];
  render() {
    return html`<footer class="bar">
      <span class="state">LISTO</span><button class="calc">CALCULAR</button><button aria-label="Grabar macro">${icon("macro")}</button>
      <div class="views"><button class="on" aria-label="Normal">${icon("viewGrid")}</button><button aria-label="Diseño de página">${icon("viewPage")}</button><button aria-label="Salto de página">${icon("viewBreak")}</button></div>
      <button class="zoom" aria-label="Alejar">−</button>
      <input type="range" aria-label="Zoom" min="0" max="200" value="100">
      <button class="zoom" aria-label="Acercar">+</button>
      <button class="pct">100 %</button>
    </footer>`;
  }
}

@customElement("app-root")
export class AppRoot extends LitElement {
  @state() private cell = "P27";
  static styles = css`
    :host {
      display: flex;
      flex-direction: column;
      height: 100vh;
      overflow: hidden;
      background: #fff;
      font-family: "Open Sans", "Noto Sans", sans-serif;
      color: #444;
    }
  `;
  render() {
    return html`
      <title-bar></title-bar>
      <ribbon-bar></ribbon-bar>
      <quick-access></quick-access>
      <formula-bar .cell=${this.cell}></formula-bar>
      <work-sheet .selected=${this.cell}></work-sheet>
      <sheet-tabs></sheet-tabs>
      <status-bar></status-bar>`;
  }
}
